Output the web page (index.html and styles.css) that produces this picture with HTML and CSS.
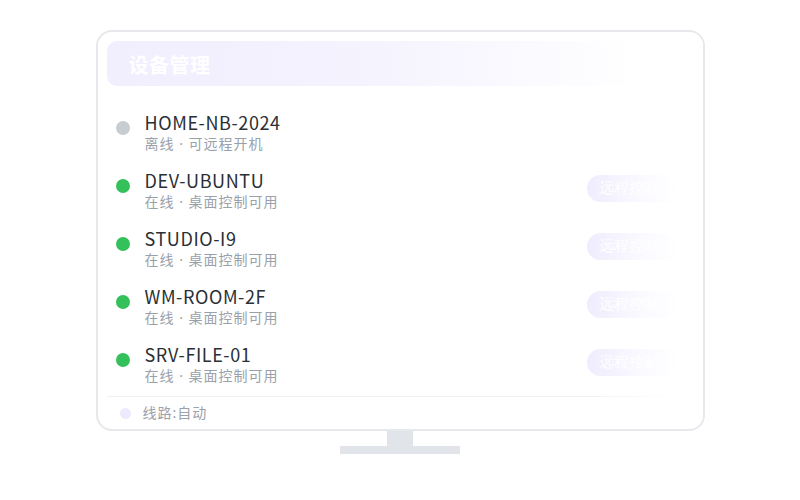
FILE: index.html
```html
<!DOCTYPE html>
<html lang="zh">
<head>
<meta charset="utf-8">
<title>设备管理</title>
<link rel="stylesheet" href="styles.css">
</head>
<body>
<div class="stage">
  <div class="monitor">
    <div class="header">
      <span class="title">设备管理</span>
      <span class="header-extra">4/5 在线</span>
    </div>
    <div class="list">
      <div class="row">
        <span class="dot off"></span>
        <div class="info">
          <div class="name">HOME-NB-2024</div>
          <div class="sub">离线 · 可远程开机</div>
        </div>
      </div>
      <div class="row">
        <span class="dot on"></span>
        <div class="info">
          <div class="name">DEV-UBUNTU</div>
          <div class="sub">在线 · 桌面控制可用</div>
        </div>
        <span class="btn">远程控制</span>
      </div>
      <div class="row">
        <span class="dot on"></span>
        <div class="info">
          <div class="name">STUDIO-I9</div>
          <div class="sub">在线 · 桌面控制可用</div>
        </div>
        <span class="btn">远程控制</span>
      </div>
      <div class="row">
        <span class="dot on"></span>
        <div class="info">
          <div class="name">WM-ROOM-2F</div>
          <div class="sub">在线 · 桌面控制可用</div>
        </div>
        <span class="btn">远程控制</span>
      </div>
      <div class="row">
        <span class="dot on"></span>
        <div class="info">
          <div class="name">SRV-FILE-01</div>
          <div class="sub">在线 · 桌面控制可用</div>
        </div>
        <span class="btn">远程控制</span>
      </div>
    </div>
    <div class="footer">
      <span class="fdot"></span>
      <span class="ftext">线路:自动</span>
    </div>
    <div class="fade"></div>
  </div>
  <div class="neck"></div>
  <div class="base"></div>
</div>
</body>
</html>
```

FILE: styles.css
```css
html, body {
  margin: 0;
  padding: 0;
  background: #ffffff;
}
body {
  font-family: "Noto Sans", "Noto Sans CJK SC", sans-serif;
}
.stage {
  display: flex;
  flex-direction: column;
  align-items: center;
  padding-top: 30px;
  width: 800px;
}
.monitor {
  position: relative;
  box-sizing: border-box;
  width: 609px;
  height: 401px;
  border: 2px solid #e6e8ec;
  border-radius: 16px;
  padding: 9px 11px 0 9px;
  display: flex;
  flex-direction: column;
  overflow: hidden;
  background: #fff;
}
.header {
  height: 45px;
  box-sizing: border-box;
  flex: none;
  border-radius: 10px;
  background: linear-gradient(90deg, #f1eefe 0%, #f5f3fe 45%, #ffffff 92%);
  display: flex;
  align-items: center;
  justify-content: space-between;
  padding: 3px 22px 0 22px;
}
.title {
  color: #ffffff;
  font-family: "Noto Sans CJK SC", sans-serif;
  font-size: 20px;
  font-weight: 700;
  line-height: 24px;
  letter-spacing: 0.5px;
}
.header-extra {
  color: #ffffff;
  font-size: 15px;
  font-weight: 700;
  padding-right: 4px;
}
.list {
  margin-top: 26px;
  display: flex;
  flex-direction: column;
  gap: 16px;
}
.row {
  height: 42px;
  display: flex;
  align-items: flex-start;
  padding-left: 9px;
}
.dot {
  flex: none;
  width: 14px;
  height: 14px;
  border-radius: 50%;
  margin-top: 9px;
  margin-right: 15px;
}
.dot.on {
  background: #34c15c;
}
.dot.off {
  background: #c8ccd3;
}
.info {
  flex: 1;
}
.name {
  font-family: "Noto Sans CJK SC", sans-serif;
  font-size: 18px;
  line-height: 20px;
  margin-bottom: 2px;
  color: #2b2f36;
  letter-spacing: 0.6px;
}
.sub {
  font-size: 14px;
  line-height: 20px;
  color: #9aa1ab;
  letter-spacing: 1px;
}
.btn {
  flex: none;
  margin-top: 5px;
  margin-right: 15px;
  height: 27px;
  width: 90px;
  box-sizing: border-box;
  padding-left: 12px;
  border-radius: 14px;
  background: #efebfe;
  color: #ffffff;
  font-family: serif;
  font-size: 15px;
  line-height: 27px;
}
.footer {
  margin-top: 10px;
  border-top: 1px solid #eef0f3;
  display: flex;
  align-items: center;
  padding: 6px 0 0 13px;
  height: 20px;
}
.fdot {
  width: 11px;
  height: 11px;
  border-radius: 50%;
  background: #ede9fe;
  margin-right: 12px;
}
.ftext {
  font-size: 14px;
  line-height: 20px;
  color: #9aa1ab;
  letter-spacing: 1px;
}
.fade {
  position: absolute;
  top: 0;
  bottom: 0;
  right: 0;
  width: 120px;
  background: linear-gradient(90deg, rgba(255,255,255,0) 0%, rgba(255,255,255,0.75) 50%, #ffffff 80%);
  pointer-events: none;
}
.neck {
  width: 26px;
  height: 15px;
  background: #e1e5e9;
}
.base {
  width: 120px;
  height: 8px;
  background: #e1e5e9;
}
```
